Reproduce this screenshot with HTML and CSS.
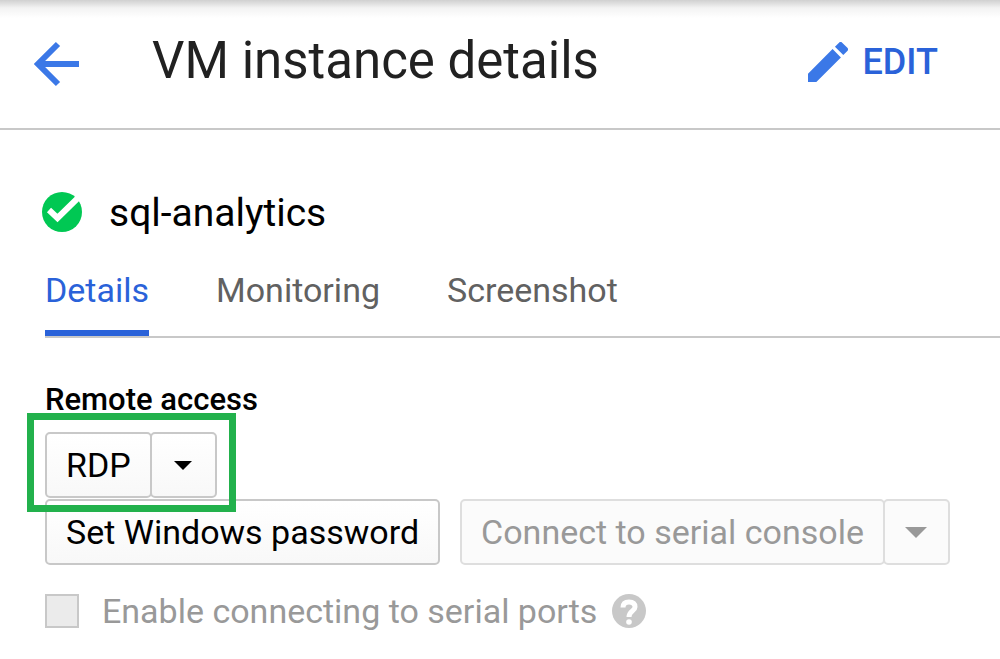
FILE: index.html
```html
<!DOCTYPE html>
<html lang="en">
<head>
    <meta charset="UTF-8">
    <meta name="viewport" content="width=device-width, initial-scale=1.0">
    <title>VM instance details</title>
    <link rel="stylesheet" href="styles.css">
</head>
<body>
    <header class="page-header">
        <a href="#" class="back-link" aria-label="Back">
            <svg width="46" height="46" viewBox="0 0 46 46" fill="none" stroke="#3b78e7" stroke-width="6">
                <path d="M45 23H5M24 3L4 23L24 43"/>
            </svg>
        </a>
        <h1 class="page-title">VM instance details</h1>
        <button type="button" class="edit-btn">
            <svg width="40" height="40" viewBox="3 3 18 18" fill="#3b78e7">
                <path d="M3 17.25V21h3.75L17.81 9.94l-3.75-3.75L3 17.25zM20.71 7.04a1 1 0 0 0 0-1.41l-2.34-2.34a1 1 0 0 0-1.41 0l-1.83 1.83 3.75 3.75 1.83-1.83z"/>
            </svg>
            EDIT
        </button>
    </header>

    <main class="content">
        <div class="instance">
            <svg width="40" height="40" viewBox="0 0 40 40">
                <circle cx="20" cy="20" r="20" fill="#00c853"/>
                <path d="M7 18L15.500 26L38 4" fill="none" stroke="#fff" stroke-width="6"/>
            </svg>
            <h2 class="instance-name">sql-analytics</h2>
        </div>

        <nav class="tabs">
            <a href="#" class="tab active">Details</a>
            <a href="#" class="tab">Monitoring</a>
            <a href="#" class="tab">Screenshot</a>
        </nav>

        <!-- Remote access -->
        <section class="remote">
            <h3 class="section-title">Remote access</h3>
            <div class="button-row">
                <div class="split-btn highlighted">
                    <button type="button" class="btn">RDP</button>
                    <button type="button" class="btn btn-caret" aria-label="RDP options">
                        <svg width="18" height="9" viewBox="0 0 18 9"><path d="M0 0H18L9 9Z" fill="currentColor"/></svg>
                    </button>
                </div>
            </div>
            <div class="button-row">
                <button type="button" class="btn">Set Windows password</button>
                <div class="split-btn">
                    <button type="button" class="btn" disabled>Connect to serial console</button>
                    <button type="button" class="btn btn-caret" aria-label="Serial console options" disabled>
                        <svg width="22" height="11" viewBox="0 0 22 11"><path d="M0 0H22L11 11Z" fill="currentColor"/></svg>
                    </button>
                </div>
            </div>
            <div class="serial-option">
                <input type="checkbox" id="serialPorts" class="checkbox" disabled>
                <label for="serialPorts">Enable connecting to serial ports</label>
                <svg width="34" height="34" viewBox="0 0 34 34">
                    <circle cx="17" cy="17" r="17" fill="#c8c8c8"/>
                    <path d="M11 13.500C11 9.500 13.500 8 17 8S23 9.500 23 13C23 17 17 17 17 23" fill="none" stroke="#fff" stroke-width="5"/>
                    <circle cx="17" cy="28" r="2.800" fill="#fff"/>
                </svg>
            </div>
        </section>
    </main>
</body>
</html>
```

FILE: styles.css
```css
* {
    margin: 0;
    padding: 0;
    box-sizing: border-box;
}

body {
    font-family: Roboto, "Liberation Sans", sans-serif;
    background: #fff;
    color: #000;
    font-size: 34px;
    line-height: 40px;
}

button {
    font: inherit;
    color: inherit;
    cursor: pointer;
}

svg {
    display: block;
    flex: none;
}

/* Header */
.page-header {
    display: flex;
    align-items: center;
    height: 130px;
    padding: 0 62px 4px 34px;
    border-bottom: 2px solid #c8c8c8;
    background: linear-gradient(#d0d0d0, #f3f3f3 8px, #fff 18px);
}

.back-link {
    padding-top: 4px;
}

.page-title {
    margin-left: 72px;
    padding-bottom: 2px;
    font-size: 51px;
    font-weight: 400;
    line-height: 60px;
    color: #212121;
}

.edit-btn {
    display: flex;
    align-items: center;
    gap: 15px;
    margin-left: auto;
    border: none;
    background: none;
    color: #2a62d9;
    font-size: 36px;
    font-weight: 500;
}

/* Instance name and tabs */
.content {
    padding: 62px 0 24px 45px;
}

.instance {
    display: flex;
    align-items: center;
    gap: 27px;
    height: 40px;
    margin-left: -3px;
}

.instance-name {
    padding-top: 2px;
    font-size: 39px;
    font-weight: 400;
}

.tabs {
    display: flex;
    gap: 67px;
    margin-top: 38px;
    border-bottom: 2px solid #c8c8c8;
}

.tab {
    padding-bottom: 20px;
    border-bottom: 6px solid transparent;
    color: #616161;
    text-decoration: none;
}

.tab.active {
    color: #2a62d9;
    border-bottom-color: #2a62d9;
}

/* Remote access */
.remote {
    margin-top: 42px;
}

.section-title {
    margin-bottom: 12px;
    font-size: 31px;
    font-weight: 500;
}

.button-row {
    display: flex;
    gap: 20px;
    margin-bottom: 1px;
}

.split-btn {
    position: relative;
    display: flex;
}

.btn {
    height: 66px;
    padding: 0 19px;
    border: 2px solid #c8c8c8;
    border-radius: 5px;
    background: linear-gradient(#fff, #f8f8f8);
    white-space: nowrap;
}

.btn:disabled {
    border-color: #dedede;
    background: #fbfbfb;
    color: #999;
    cursor: default;
}

.btn-caret {
    display: flex;
    align-items: center;
    justify-content: center;
    width: 67px;
    margin-left: -2px;
}

/* Green frame drawn round the RDP button */
.highlighted::after {
    content: "";
    position: absolute;
    inset: -19px -19px -14px -18px;
    border: 7px solid #22b14c;
    pointer-events: none;
    z-index: 1;
}

.serial-option {
    display: flex;
    align-items: center;
    margin-top: 26px;
    color: #999;
}

.checkbox {
    appearance: none;
    width: 34px;
    height: 34px;
    margin-right: 23px;
    border: 2px solid #c8c8c8;
    background: #ebebeb;
}

.serial-option label {
    margin-right: 15px;
}
```
